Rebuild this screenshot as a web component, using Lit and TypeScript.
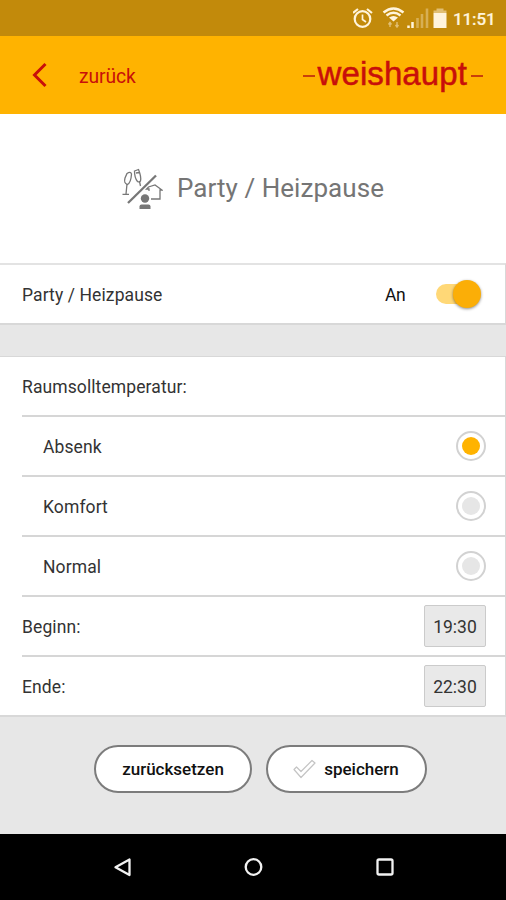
import { LitElement, html, css } from "lit";
import { customElement, state } from "lit/decorators.js";
import { classMap } from "lit/directives/class-map.js";

@customElement("status-bar")
class StatusBar extends LitElement {
  static styles = css`
    :host { display: flex; height: 36px; background: #c28a0b; color: #fff4dc; justify-content: flex-end; }
    svg { display: block; width: 100px; height: 36px; }
    .clock { width: 53px; font: 500 17px/38px Roboto, sans-serif; letter-spacing: -0.1px; -webkit-text-stroke: 0.2px #fff4dc; }
  `;
  render() {
    return html`
      <svg viewBox="2.5 0 100 36" fill="none" stroke="currentColor">
        <circle cx="12" cy="19" r="7.8" stroke-width="2.2" />
        <path d="M12 14.5V19.5L15.5 22" stroke-width="1.7" />
        <path d="M2.500 13L7.500 9M21.500 13L16.500 9" stroke-width="2.2" />
        <path d="M33 12.500Q43 4.500 53 12.500M36 15.500Q43 10 50 15.500" stroke-width="2.4" />
        <path d="M38.500 17.600Q43 14.500 47.500 17.600L43 21.500Z" fill="currentColor" stroke="none" />
        <path d="M39.500 22V27M38 24.500L39.500 22.500L41 24.500M46.500 22V27M45 25L46.500 27L48 25" stroke-width="1.4" opacity="0.5" />
        <path d="M58 25.500V28M62 22V28" stroke-width="2.5" />
        <path d="M67 18V28M71.500 14V28M76.500 8.500V28" stroke-width="2.6" opacity="0.35" />
        <path d="M83 13H96V28H83Z" fill="currentColor" stroke="none" />
        <path d="M83 10.500H86V8.500H93V10.500H96V13H83Z" fill="currentColor" stroke="none" opacity="0.5" />
      </svg>
      <span class="clock">11:51</span>
    `;
  }
}

@customElement("app-header")
class AppHeader extends LitElement {
  static styles = css`
    :host { display: flex; align-items: center; height: 78px; background: #ffb300; color: #c80f0a;
      box-sizing: border-box; padding: 0 23px 0 32px; }
    .chevron { width: 16px; height: 26px; margin-right: 31px; }
    .back { flex: 1; font: 400 19.3px/24px Roboto, sans-serif; letter-spacing: -0.1px; padding-top: 3px; }
    .brand { display: flex; align-items: center; gap: 4px; }
    .name { font: 400 33px/40px "Liberation Sans", Arial, sans-serif; -webkit-text-stroke: 0.5px #c80f0a;
      letter-spacing: 0.1px; margin: -2px 0 0 -1px; }
    .dash { width: 12px; height: 1.5px; background: #c9400a; margin-top: 2px; }
  `;
  render() {
    return html`
      <svg class="chevron" viewBox="0 0 16 26" fill="none" stroke="currentColor" stroke-width="3">
        <path d="M13.500 2L2.500 13L13.500 24" />
      </svg>
      <span class="back">zurück</span>
      <div class="brand"><i class="dash"></i><span class="name">weishaupt</span><i class="dash"></i></div>
    `;
  }
}

@customElement("party-icon")
class PartyIcon extends LitElement {
  static styles = css`
    :host { display: block; width: 42px; height: 42px; color: #777; }
    svg { display: block; }
  `;
  render() {
    return html`
      <svg width="42" height="42" viewBox="0 0 42 42" fill="none" stroke="currentColor" stroke-width="1.3">
        <path d="M6 5.500Q9.500 3 10.500 6Q10 14.500 6.500 16.500Q2.500 15.500 4 10Z" />
        <path d="M6 16L5 26M1.500 26.300H8" />
        <path d="M13.500 3L17.500 1.500Q20.500 9 19.500 13Q18 14.500 16.500 13.500Q13.500 10 13.500 3ZM15 5L18.500 4.500" />
        <path d="M18.500 13.500L19.500 18" />
        <path d="M7 35L35 7.500" stroke-width="2.3" />
        <path d="M28 23V21H25.500L27.500 19L34 17L41 22H39V31H30" />
        <circle cx="24" cy="30.500" r="4.2" fill="currentColor" stroke="none" />
        <path d="M18.500 41V38.500Q18.500 36.500 20.500 36.500H27.500Q29.500 36.500 29.500 38.500V41Z" fill="currentColor" stroke="none" />
      </svg>
    `;
  }
}

@customElement("app-root")
class AppRoot extends LitElement {
  @state() private on = true;
  @state() private mode = "Absenk";

  static styles = css`
    :host { display: flex; flex-direction: column; height: 900px; width: 506px; background: #e7e7e7;
      font: 400 17.5px/24px Roboto, sans-serif; color: #333; letter-spacing: 0.1px; overflow: hidden; }
    * { box-sizing: border-box; }
    .title { height: 149px; background: #fff; display: flex; align-items: center; gap: 14px; padding-left: 121px;
      font-size: 26px; line-height: 30px; color: #757575; letter-spacing: 0.05px; }
    .title span { margin-top: -2px; }
    .panel { background: #fff; border: 2px solid #d8d8d8; border-left: 0; border-right-width: 1px; }
    .power { height: 62px; display: flex; align-items: center; padding: 0 23px 0 22px; border-top-color: #e3e3e3; }
    .power .label { flex: 1; padding-top: 2px; }
    .power .value { color: #111; margin-right: 31px; padding-top: 2px; letter-spacing: -0.6px; }
    .switch { width: 46px; height: 30px; padding: 0; border: 0; background: none; display: flex; align-items: center; }
    .switch::before { content: ""; width: 34px; height: 20px; border-radius: 10px; background: #ffd877; }
    .switch::after { content: ""; width: 28px; height: 28px; border-radius: 50%; background: #fbae07;
      margin-left: -17px; box-shadow: 0 1px 3px rgba(0, 0, 0, 0.45); }
    .settings { margin-top: 31px; height: 361px; padding-left: 22px; border-top-width: 1px; }
    .row { height: 60px; display: flex; align-items: center; justify-content: space-between; padding: 2px 19px 0 0;
      border-bottom: 2px solid #d6d6d6; }
    .row:last-child { border-bottom: 0; height: 58px; }
    .option { padding-left: 21px; }
    .radio { width: 30px; height: 30px; border: 2px solid #d2d2d2; border-radius: 50%; background: #fff;
      display: grid; place-items: center; padding: 0; margin-top: -2px; }
    .radio::after { content: ""; width: 18px; height: 18px; border-radius: 50%; background: #e6e6e6; }
    .radio.checked::after { background: #ffb300; }
    .time { width: 62px; height: 42px; border: 1px solid #cbcbcb; border-radius: 2px; background: #e9e9e9;
      text-align: center; line-height: 42px; letter-spacing: 0; margin-top: -2px; }
    .actions { display: flex; gap: 14px; padding: 28px 0 0 94px; flex: 1; }
    .pill { height: 48px; border: 2.5px solid #7c7c7c; border-radius: 25px; background: #fff; color: #111;
      font: 500 17px/24px Roboto, sans-serif; letter-spacing: 0; display: flex; align-items: center; justify-content: center; padding: 0; }
    .reset { width: 158px; }
    .save { width: 161px; gap: 8px; padding-right: 2px; }
    .nav { height: 66px; background: #000; }
    .nav svg { display: block; }
  `;

  render() {
    return html`
      <status-bar></status-bar>
      <app-header></app-header>
      <div class="title"><party-icon></party-icon><span>Party / Heizpause</span></div>
      <div class="panel power">
        <span class="label">Party / Heizpause</span>
        <span class="value">${this.on ? "An" : "Aus"}</span>
        <button class="switch" @click=${() => (this.on = !this.on)}></button>
      </div>
      <div class="panel settings">
        <div class="row">Raumsolltemperatur:</div>
        ${["Absenk", "Komfort", "Normal"].map(
          (name) => html`<div class="row option">
            ${name}
            <button class=${classMap({ radio: true, checked: this.mode === name })} @click=${() => (this.mode = name)}></button>
          </div>`
        )}
        <div class="row">Beginn:<span class="time">19:30</span></div>
        <div class="row">Ende:<span class="time">22:30</span></div>
      </div>
      <div class="actions">
        <button class="pill reset">zurücksetzen</button>
        <button class="pill save">
          <svg width="24" height="20" viewBox="0 0 24 20" fill="none" stroke="#c4c4c4" stroke-width="1.2" stroke-linejoin="round">
            <path d="M2 10.500L4.500 8L9 12.500L20 1.500L23 4L9 18.500Z" />
          </svg>
          speichern
        </button>
      </div>
      <div class="nav">
        <svg width="506" height="66" viewBox="0 0 506 66" fill="none" stroke="#f2f2f2" stroke-width="2.3" stroke-linejoin="round">
          <path d="M129.500 25.500V41L115.500 33.200Z" />
          <circle cx="253.500" cy="33" r="7.8" />
          <rect x="377.500" y="25.500" width="15" height="15" rx="1.5" />
        </svg>
      </div>
    `;
  }
}
